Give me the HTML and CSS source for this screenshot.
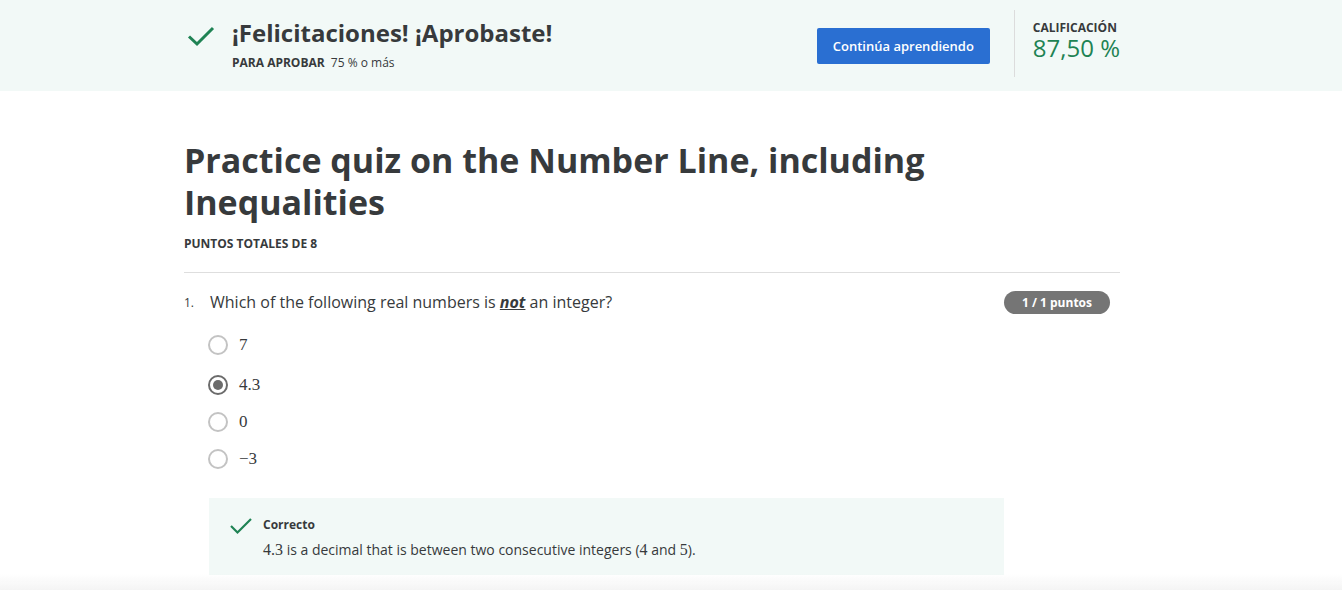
FILE: index.html
```html
<!DOCTYPE html>
<html lang="es">
<head>
<meta charset="utf-8">
<link rel="stylesheet" href="styles.css">
</head>
<body>
<header class="banner">
  <div class="banner-inner">
    <div class="banner-left">
      <svg class="check-big" width="30" height="24" viewBox="0 0 30 24"><path d="M3 12.5 L11 20 L27 4" fill="none" stroke="#1f8354" stroke-width="3"/></svg>
      <div>
        <h2 class="congrats">¡Felicitaciones! ¡Aprobaste!</h2>
        <div class="pass"><span class="pass-label">PARA APROBAR</span> 75 % o más</div>
      </div>
    </div>
    <div class="banner-right">
      <button class="btn">Continúa aprendiendo</button>
      <div class="grade">
        <div class="grade-label">CALIFICACIÓN</div>
        <div class="grade-value">87,50 %</div>
      </div>
    </div>
  </div>
</header>
<main class="content">
  <h1 class="title">Practice quiz on the Number Line, including Inequalities</h1>
  <div class="total">PUNTOS TOTALES DE 8</div>
  <hr class="sep">
  <section class="question">
    <div class="q-head">
      <span class="q-num">1.</span>
      <p class="q-text">Which of the following real numbers is <strong><em><u>not</u></em></strong> an integer?</p>
      <span class="badge">1 / 1 puntos</span>
    </div>
    <ul class="options">
      <li class="option"><span class="radio"></span><span class="math">7</span></li>
      <li class="option"><span class="radio checked"></span><span class="math">4.3</span></li>
      <li class="option"><span class="radio"></span><span class="math">0</span></li>
      <li class="option"><span class="radio"></span><span class="math">−3</span></li>
    </ul>
    <div class="feedback">
      <svg class="check-small" width="24" height="20" viewBox="0 0 24 20"><path d="M2 10 L8.5 16.5 L22 3" fill="none" stroke="#1f8354" stroke-width="2.2"/></svg>
      <div>
        <div class="fb-title">Correcto</div>
        <div class="fb-text"><span class="math">4.3</span> is a decimal that is between two consecutive integers (<span class="math">4</span> and <span class="math">5</span>).</div>
      </div>
    </div>
  </section>
</main>
<div class="bottom-shade"></div>
</body>
</html>
```
FILE: styles.css
```css
* { box-sizing: border-box; }
body {
  margin: 0;
  font-family: "Open Sans", "Liberation Sans", sans-serif;
  color: #373a3c;
  background: #fff;
  overflow: hidden;
}
.banner {
  background: #f2f9f7;
  height: 91px;
}
.banner-inner {
  display: flex;
  justify-content: space-between;
  padding: 0 222px 0 186px;
  height: 100%;
}
.banner-left {
  display: flex;
  align-items: flex-start;
  gap: 16px;
  padding-top: 22px;
}
.check-big { margin-top: 2px; }
.congrats {
  margin: 0;
  font-size: 24px;
  font-weight: 700;
  line-height: 22px;
  color: #373a3c;
}
.pass {
  margin-top: 11px;
  font-size: 12px;
  line-height: 16px;
  color: #373a3c;
}
.pass-label { font-weight: 700; margin-right: 3px; }
.banner-right {
  display: flex;
  align-items: flex-start;
}
.btn {
  margin-top: 28px;
  width: 173px;
  height: 36px;
  background: #2a6fd2;
  color: #fff;
  border: none;
  border-radius: 2px;
  font-family: inherit;
  font-size: 13px;
  font-weight: 600;
  margin-right: 24px;
}
.grade {
  border-left: 1px solid #dcdcdc;
  margin-top: 10px;
  height: 67px;
  padding: 10px 0 0 18px;
}
.grade-label {
  font-size: 12px;
  font-weight: 700;
  line-height: 15px;
}
.grade-value {
  font-size: 24px;
  line-height: 26px;
  color: #1f8354;
}
.content {
  padding-left: 184px;
  width: 1120px;
}
.title {
  margin: 48px 0 0;
  font-size: 34px;
  line-height: 42px;
  font-weight: 700;
  color: #373a3c;
  max-width: 760px;
}
.total {
  margin-top: 14px;
  font-size: 12px;
  font-weight: 700;
  line-height: 14px;
}
.sep {
  margin: 21px 0 0;
  border: 0;
  border-top: 1px solid #dedede;
}
.q-head {
  display: flex;
  align-items: center;
  margin-top: 17px;
  padding-right: 10px;
}
.q-num {
  font-size: 12px;
  width: 26px;
  color: #373a3c;
}
.q-text {
  margin: 0;
  flex: 1;
  font-size: 16px;
  line-height: 24px;
  color: #373a3c;
}
.q-text strong { font-weight: 700; }
.badge {
  background: #757575;
  color: #fff;
  font-size: 12px;
  font-weight: 700;
  height: 23px;
  line-height: 23px;
  padding: 0 18px;
  border-radius: 12px;
}
.options {
  list-style: none;
  margin: 21px 0 0;
  padding: 0 0 0 24px;
}
.option {
  display: flex;
  align-items: center;
  gap: 11px;
  height: 20px;
  margin-bottom: 17px;
}
.option:nth-child(2) { margin-top: 20px; }
.radio {
  width: 20px;
  height: 20px;
  border: 2px solid #c3c3c3;
  border-radius: 50%;
  position: relative;
}
.radio.checked {
  border-color: #6b6b6b;
}
.radio.checked::after {
  content: "";
  position: absolute;
  left: 3px;
  top: 3px;
  width: 10px;
  height: 10px;
  border-radius: 50%;
  background: #6b6b6b;
}
.math {
  font-family: "Liberation Serif", "DejaVu Serif", serif;
  font-size: 17px;
  color: #373a3c;
}
.feedback {
  margin: 29px 0 0 25px;
  width: 795px;
  height: 77px;
  background: #f2f9f7;
  display: flex;
  gap: 10px;
  padding: 18px 0 0 20px;
}
.fb-title {
  font-size: 12px;
  font-weight: 700;
  line-height: 18px;
}
.fb-text {
  margin-top: 7px;
  font-size: 14px;
  line-height: 18px;
}
.fb-text .math { font-size: 16px; }
.bottom-shade {
  position: fixed;
  left: 0;
  right: 0;
  bottom: 0;
  height: 16px;
  background: linear-gradient(to bottom, rgba(240,240,240,0), rgba(244,244,244,1));
}
```
